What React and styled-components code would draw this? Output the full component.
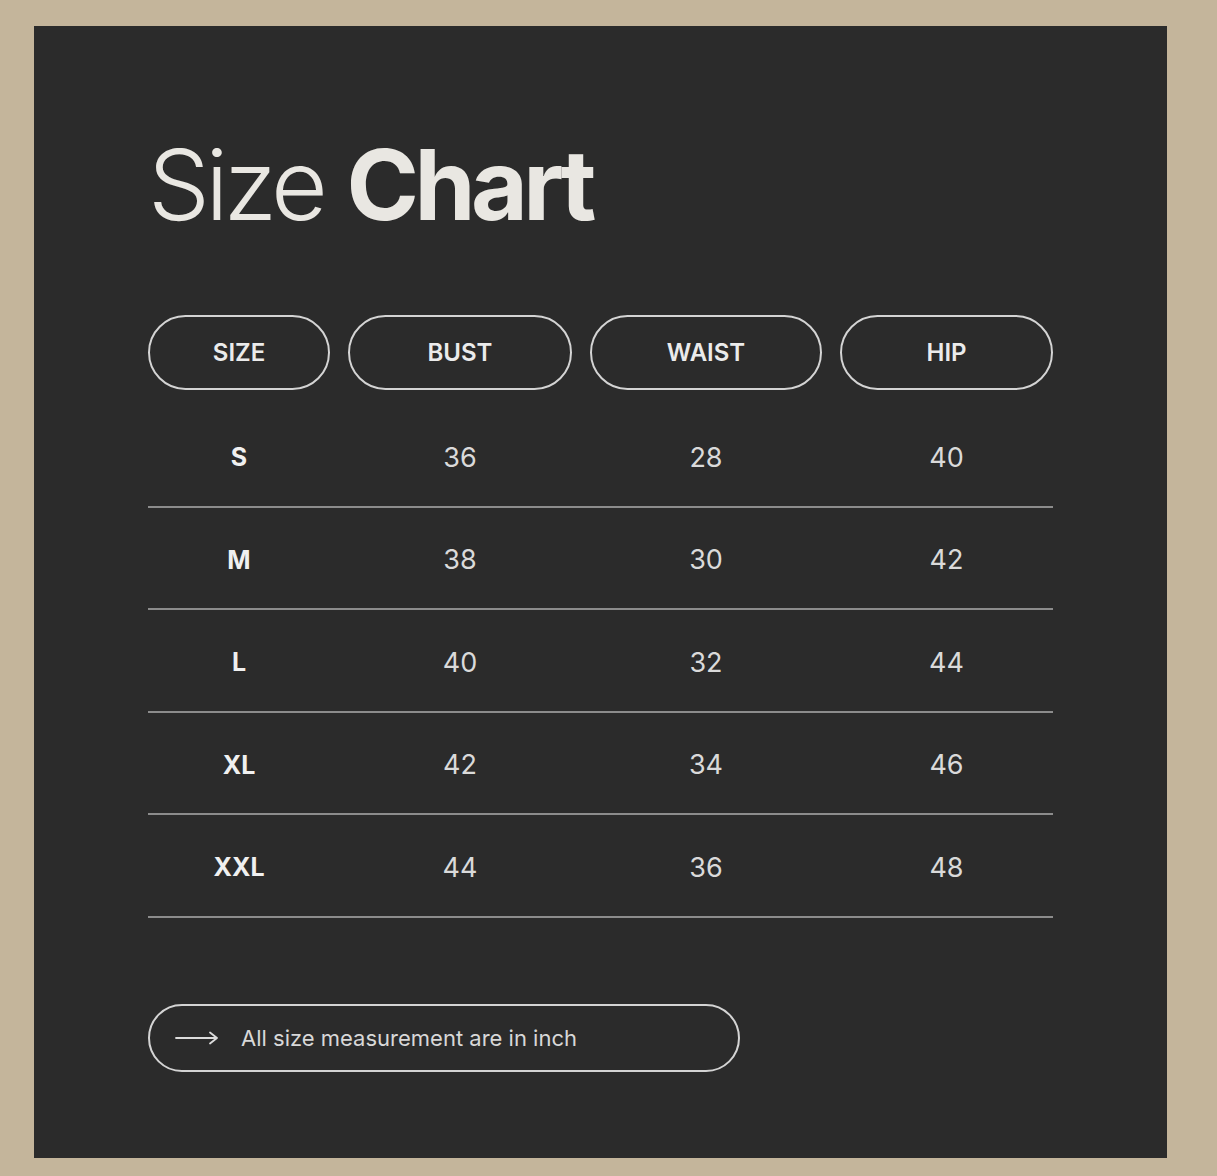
import React from "react";
import styled, { createGlobalStyle } from "styled-components";

const Global = createGlobalStyle`
  html, body {
    margin: 0;
    padding: 0;
    background: #c4b59b;
  }
  body {
    font-family: Inter, "Noto Sans", sans-serif;
  }
`;

const columns = "182px 224px 232px 213px";

const rows = [
  ["S", "36", "28", "40"],
  ["M", "38", "30", "42"],
  ["L", "40", "32", "44"],
  ["XL", "42", "34", "46"],
  ["XXL", "44", "36", "48"],
];

const App = () => {
  return (
    <>
      <Global />
      <Page>
        <Panel>
          <Title>
            <span className="light">Size </span>
            <span className="bold">Chart</span>
          </Title>

          <Header>
            {["SIZE", "BUST", "WAIST", "HIP"].map((h) => (
              <Pill key={h}>{h}</Pill>
            ))}
          </Header>

          <Table>
            {rows.map((r) => (
              <Row key={r[0]}>
                <Cell $bold>{r[0]}</Cell>
                <Cell>{r[1]}</Cell>
                <Cell>{r[2]}</Cell>
                <Cell>{r[3]}</Cell>
              </Row>
            ))}
          </Table>

          <Note>
            <svg width="44" height="14" viewBox="0 0 44 14" fill="none">
              <path d="M1 7 H42 M35 1.5 L42 7 L35 12.5" stroke="#dcdcdc" strokeWidth="1.8" strokeLinecap="round" strokeLinejoin="round" />
            </svg>
            <span>All size measurement are in inch</span>
          </Note>
        </Panel>
      </Page>
    </>
  );
};

export default App;

const Page = styled.div`
  width: 1217px;
  height: 1176px;
  padding: 26px 0 0 34px;
  box-sizing: border-box;
`;

const Panel = styled.div`
  width: 1133px;
  height: 1132px;
  background: #2b2b2b;
  box-sizing: border-box;
  padding: 110px 0 0 114px;
`;

const Title = styled.h1`
  margin: 0 0 81px;
  font-size: 98px;
  line-height: 1;
  letter-spacing: -4.5px;
  color: #e9e7e2;
  .light {
    font-weight: 350;
  }
  .bold {
    font-weight: 700;
  }
`;

const Header = styled.div`
  display: grid;
  grid-template-columns: ${columns};
  column-gap: 18px;
`;

const Pill = styled.div`
  height: 75px;
  box-sizing: border-box;
  border: 2px solid #d4d4d4;
  border-radius: 40px;
  display: flex;
  align-items: center;
  justify-content: center;
  color: #ebebeb;
  font-size: 24px;
  font-weight: 600;
`;

const Table = styled.div`
  width: 905px;
  margin-top: 15px;
`;

const Row = styled.div`
  display: grid;
  grid-template-columns: ${columns};
  column-gap: 18px;
  height: 102.5px;
  align-items: center;
  border-bottom: 2px solid #8c8c8c;
  box-sizing: border-box;
  padding-top: 4px;
`;

const Cell = styled.div`
  text-align: center;
  color: ${(p) => (p.$bold ? "#f0f0f0" : "#dadada")};
  font-size: ${(p) => (p.$bold ? "25px" : "27px")};
  font-weight: ${(p) => (p.$bold ? 700 : 400)};
`;

const Note = styled.div`
  margin-top: 86px;
  width: 592px;
  height: 68px;
  box-sizing: border-box;
  border: 2px solid #d4d4d4;
  border-radius: 34px;
  display: flex;
  align-items: center;
  gap: 22px;
  padding-left: 25px;
  color: #d8d8d8;
  font-size: 22px;
`;
